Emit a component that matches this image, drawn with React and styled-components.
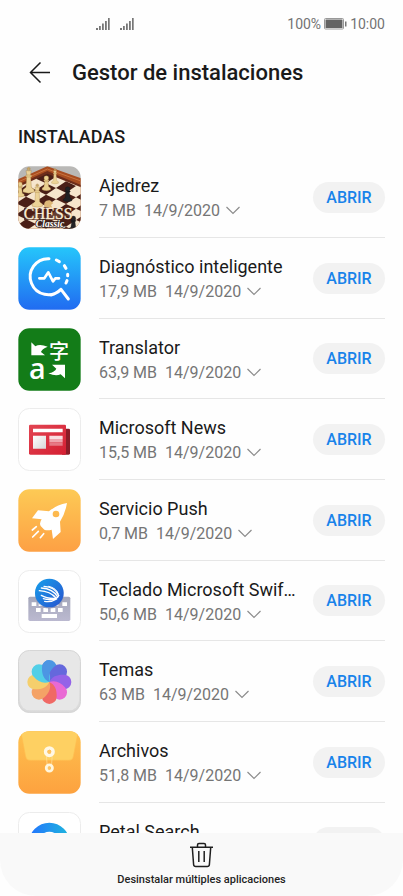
import React from "react";
import styled, { createGlobalStyle } from "styled-components";

const GlobalStyle = createGlobalStyle`
  * { box-sizing: border-box; }
  body { margin: 0; background: #ffffff; }
  button { font-family: inherit; border: 0; padding: 0; cursor: pointer; }
`;

const Screen = styled.div`
  display: flex;
  flex-direction: column;
  height: 100vh;
  overflow: hidden;
  background: #fefefe;
  color: #1a1a1a;
  font-family: Roboto, "Liberation Sans", sans-serif;
`;

const StatusBar = styled.div`
  display: flex;
  flex: none;
  align-items: center;
  justify-content: space-between;
  height: 48px;
  padding: 0 18px 0 96px;
  color: #737373;
  font-size: 14px;
`;

const StatusGroup = styled.div`
  display: flex;
  align-items: center;
  gap: ${(p) => p.$gap}px;
`;

const Header = styled.header`
  display: flex;
  flex: none;
  align-items: center;
  gap: 20px;
  height: 50px;
  padding: 0 28px;
`;

const BackButton = styled.button`
  display: flex;
  background: none;
  color: #1a1a1a;
`;

const Title = styled.h1`
  margin: 0;
  font-size: 22px;
  font-weight: 500;
  line-height: 28px;
`;

const SectionTitle = styled.h2`
  flex: none;
  margin: 0;
  padding: 27px 18px 8px;
  font-size: 18px;
  font-weight: 500;
  line-height: 24px;
`;

const AppList = styled.ul`
  display: grid;
  flex: 1;
  grid-auto-rows: 81px 81px 80px;
  align-content: start;
  min-height: 0;
  margin: 0;
  padding: 0 18px;
  overflow: hidden;
  list-style: none;
`;

const AppRow = styled.li`
  display: flex;
  align-items: center;
  gap: 18px;
  min-width: 0;
`;

const AppIcon = styled.svg`
  flex: none;
  width: 63px;
  height: 63px;
`;

const RowBody = styled.div`
  display: flex;
  flex: 1;
  align-items: center;
  gap: 16px;
  align-self: stretch;
  min-width: 0;
  border-bottom: 1px solid #e6e6e6;
`;

const AppInfo = styled.div`
  flex: 1;
  min-width: 0;
  padding-top: 3px;
`;

const AppName = styled.div`
  overflow: hidden;
  font-size: 18px;
  line-height: 24px;
  text-overflow: ellipsis;
  white-space: nowrap;
`;

const AppMeta = styled.div`
  display: flex;
  align-items: center;
  gap: 8px;
  margin-top: 1px;
  color: #757575;
  font-size: 16px;
  line-height: 24px;
  white-space: nowrap;
`;

const ExpandButton = styled.button`
  display: flex;
  margin-left: -2px;
  background: none;
  color: #8c8c8c;
`;

const OpenButton = styled.button`
  flex: none;
  width: 72px;
  height: 31px;
  border-radius: 16px;
  background: #f2f2f2;
  color: #1883ea;
  font-size: 16px;
  font-weight: 500;
`;

const BottomBar = styled.footer`
  flex: none;
  overflow: hidden;
  border-radius: 0 0 36px 36px;
  background: #f9f9f9;
`;

const UninstallButton = styled.button`
  display: flex;
  flex-direction: column;
  align-items: center;
  width: 100%;
  height: 63px;
  padding-top: 9px;
  background: none;
  color: #1f1f1f;
  font-size: 11px;
  font-weight: 500;
  line-height: 16px;
  gap: 4px;
`;

const SignalIcon = () => (
  <svg width="14" height="14" viewBox="0 0 14 14" fill="#777777" aria-hidden="true">
    <path d="M0 11h2v2H0zM3 9h1.800v4H3zM6 6.500h1.800v6.500H6zM9 4h1.800v9H9zM12 1h1.700v12H12z" />
  </svg>
);

const BatteryIcon = () => (
  <svg width="23" height="12" viewBox="0 0 23 12" aria-hidden="true">
    <rect x=".5" y=".5" width="19" height="10.500" rx="1" fill="#fff" stroke="#999" />
    <rect x="1.500" y="1.500" width="17" height="8.500" fill="#646464" />
    <path d="M21 3.500h1.500v5H21z" fill="#777" />
  </svg>
);

const BackIcon = () => (
  <svg width="24" height="24" viewBox="0 0 24 24" fill="none" stroke="currentColor" strokeWidth="1.500" aria-hidden="true">
    <path d="M22 11.500H3M12.500 1.500l-10 10 10 10" />
  </svg>
);

const ChevronIcon = () => (
  <svg width="14" height="10" viewBox="0 0 14 10" fill="none" stroke="currentColor" strokeWidth="1.200" aria-hidden="true">
    <path d="M.5 1 7 7.500 13.500 1" />
  </svg>
);

const TrashIcon = () => (
  <svg width="26" height="26" viewBox="0 0 26 26" fill="none" stroke="currentColor" strokeWidth="1.500" strokeLinejoin="round" aria-hidden="true">
    <path d="M1 5.200h23M8.500 5V3q0-1.500 1.500-1.500h5q1.500 0 1.500 1.500v2M3.300 5.500l1.300 17Q4.800 24.500 6.700 24.500h11.600q1.900 0 2.100-2l1.300-17M9.800 9v11M15.200 9v11" />
  </svg>
);

const Tile = ({ children, fill, id, from, to, stroke = "none" }) => (
  <AppIcon viewBox="0 0 189 189" aria-hidden="true">
    <defs>
      <linearGradient id={id} x1="0" y1="0" x2="0" y2="1">
        <stop offset="0" stopColor={from || fill} />
        <stop offset="1" stopColor={to || fill} />
      </linearGradient>
      <clipPath id={`${id}-clip`}>
        <rect x="1" y="1" width="187" height="187" rx="33" />
      </clipPath>
    </defs>
    <g clipPath={`url(#${id}-clip)`}>
      <rect width="189" height="189" fill={`url(#${id})`} />
      {children}
    </g>
    <rect x="1.500" y="1.500" width="186" height="186" rx="33" fill="none" stroke={stroke} strokeWidth="3" />
  </AppIcon>
);

const BOARD_CELLS = [];
for (let r = 0; r < 7; r += 1) {
  for (let c = 0; c < 7; c += 1) {
    if ((r + c) % 2 === 0) BOARD_CELLS.push([c, r]);
  }
}

const Pawn = ({ x, y, s = 1, fill = "#e9cf8f", edge = "#9c7435" }) => (
  <g transform={`translate(${x} ${y}) scale(${s})`} fill={fill} stroke={edge} strokeWidth="1">
    <path d="M-5-25h10L8-4l6 4v6q-14 6-28 0V0l6-4z" />
    <ellipse cy="-25" rx="9" ry="3" />
    <circle cy="-33" r="8" />
  </g>
);

const King = ({ x, y, s = 1, fill = "#ecd397", edge = "#9c7435" }) => (
  <g transform={`translate(${x} ${y}) scale(${s})`} fill={fill} stroke={edge} strokeWidth="1">
    <path d="M-6-42H6L8-8l9 7v7q-17 7-34 0v-7l9-7z" />
    <path d="M-8-58H8L5-43H-5z" />
    <ellipse cy="-42" rx="10" ry="3" />
    <path d="M-2-68h4v10h-4zM-5-65H5v3H-5z" />
  </g>
);

const ChessIcon = () => (
  <Tile id="chess" fill="#b9b8b6">
    <path d="M0 40 88 1l101 36v152H0z" fill="#a84d20" />
    <path d="M0 48 88 9l101 36" fill="none" stroke="#c97440" strokeWidth="3" />
    <path d="M0 60 88 18l101 42v129H0z" fill="#f6e6cd" />
    <g transform="matrix(30 14 -30 20 84 18)">
      {BOARD_CELLS.map(([c, r]) => (
        <rect key={`${c}-${r}`} x={c} y={r} width="1" height="1" fill="#4a1f17" />
      ))}
    </g>
    <path d="M0 56 88 15l101 42v7L88 23 0 64z" fill="#6d2c19" />
    <Pawn x={6} y={85} s={0.9} />
    <King x={32} y={72} s={1} />
    <Pawn x={85} y={66} s={0.9} />
    <King x={111} y={48} s={0.6} />
    <King x={58} y={115} s={0.9} />
    <path d="M79 123q-4-22 17-20l10 8-7 6 4 8z" fill="#dcb777" />
    <Pawn x={149} y={99} s={0.9} fill="#202124" edge="#121212" />
    <Pawn x={166} y={187} s={0.9} fill="#242326" edge="#121212" />
    <path d="M18 126h142v36H18z" fill="#4b1e18" opacity=".85" />
    <text x="90" y="159" textAnchor="middle" fontFamily="Liberation Serif, serif" fontSize="47" fill="#fbeed6" stroke="#fbeed6" strokeWidth="1">CHESS</text>
    <text x="96" y="183" textAnchor="middle" fontFamily="Liberation Serif, serif" fontSize="29" fontStyle="italic" fontWeight="700" fill="#fff" stroke="#38231e" strokeWidth="5" paintOrder="stroke">Classic</text>
  </Tile>
);

const DiagnosticIcon = () => (
  <Tile id="diagnostic" from="#25c6fb" to="#216bf1">
    <g fill="none" stroke="#fff" strokeWidth="9" strokeLinecap="round" strokeLinejoin="round">
      <path d="M93 35a54 54 0 1 0 36 92l22 29M129 127q-12 13-30 17" />
      <path d="M115 39l9 5M139 56l5 8M149 82v4M147 101l-3 7" />
      <path d="M64 94h15l12-18 14 27 7-9h11" strokeWidth="8" />
    </g>
  </Tile>
);

const TranslatorIcon = () => (
  <Tile id="translator" fill="#137c18">
    <text x="33" y="152" fontFamily="Open Sans, sans-serif" fontSize="86" fontWeight="600" fill="#fff">a</text>
    <text x="93" y="93" fontFamily="Noto Sans CJK SC, sans-serif" fontSize="60" fontWeight="500" fill="#fff">字</text>
    <path d="M40 43l12 12q13-8 37 1-18 7-20 16l12 10H40zM141 151l-13-12q-15 7-37-3 20-4 24-14l-13-12h39z" fill="#fff" />
  </Tile>
);

const NewsIcon = () => (
  <Tile id="news" fill="#fff" stroke="#ececec">
    <defs>
      <linearGradient id="news-page" x1="0" y1="0" x2="1" y2="1"><stop stopColor="#e24552" /><stop offset="1" stopColor="#d51f32" /></linearGradient>
      <linearGradient id="news-photo" x1="0" y1="0" x2="1" y2="1"><stop stopColor="#fff" /><stop offset="1" stopColor="#d8d8d8" /></linearGradient>
    </defs>
    <path d="M140 62h12q4 0 4 4v70q0 4-4 4h-20z" fill="#8b1c27" />
    <rect x="33" y="50" width="111" height="90" rx="4" fill="url(#news-page)" />
    <path d="M45 62h89v11H45z" fill="#fff" />
    <path d="M45 83h39v39H45z" fill="url(#news-photo)" />
    <path d="M94 83h40v10H94z" fill="#f9dfe2" />
    <path d="M94 93h40v10H94z" fill="#efa5ae" />
    <path d="M94 103h40v10H94z" fill="#e67985" />
  </Tile>
);

const PushIcon = () => (
  <Tile id="push" from="#fdca55" to="#fda044">
    <path fillRule="evenodd" d="M147 42q-31 5-54 25l-33-3-18 24 29 3q-8 11-3 20l11 11q9 4 22 0l4 28 23-21-2-31q15-22 21-56zM114 65a10 10 0 1 0 0 20 10 10 0 1 0 0-20z" fill="#fff" />
    <path d="M55 113l-12 10M61 127l-17 17M77 134l-10 12" fill="none" stroke="#fff" strokeWidth="5" strokeLinecap="round" />
  </Tile>
);

const SwiftIcon = () => (
  <Tile id="swift" fill="#fff" stroke="#ececec">
    <defs>
      <linearGradient id="swift-ball" x1="0" y1="0" x2="1" y2="1"><stop stopColor="#16a0eb" /><stop offset="1" stopColor="#2852ce" /></linearGradient>
      <linearGradient id="swift-keys" x1="0" y1="0" x2="0" y2="1"><stop stopColor="#a5a8bb" /><stop offset="1" stopColor="#bbb9d0" /></linearGradient>
    </defs>
    <rect x="31" y="80" width="126" height="73" rx="5" fill="url(#swift-keys)" />
    <path d="M41 97h14v11H41zM62 97h14v11H62zM107 97h14v11h-14zM133 97h14v11h-14zM54 114h14v12H54zM76 114h14v12H76zM98 114h14v12H98zM120 114h14v12h-14zM71 132h46v12H71z" fill="#fff" />
    <circle cx="94" cy="73" r="43" fill="#777ea4" opacity=".35" />
    <circle cx="94" cy="69" r="43" fill="url(#swift-ball)" />
    <g fill="none" stroke="#fff" strokeWidth="4" strokeLinecap="round">
      <path d="M78 49q34 2 44 28M70 54q35 2 49 27M64 62q33 2 50 22" />
      <path d="M122 77q-2 7-10 8-26 1-42-9M118 83q-18 10-42 3M116 87q-15 10-36 7" />
      <path d="M92 49q24 5 29 23" strokeWidth="3" />
    </g>
  </Tile>
);

const PETALS = [
  ["#4c96e3", 0], ["#6568dc", 45], ["#9463e8", 90], ["#e969d4", 135],
  ["#f06965", 180], ["#f4a266", 225], ["#f5cf6c", 270], ["#52cfe7", 315],
];

const ThemesIcon = () => (
  <Tile id="themes" from="#e9e9e9" to="#d9d9d9" stroke="#d6d6d6">
    <rect x="6" y="3" width="177" height="178" rx="30" fill="#e7e7e7" />
    <defs>
      <clipPath id="left-half"><path d="M60 20h34v77H60z" /></clipPath>
    </defs>
    {PETALS.map(([color, angle]) => (
      <path
        key={angle}
        d="M94 96C76 88 71 70 72 52a22 22 0 0 1 44 0C117 70 112 88 94 96z"
        fill={color}
        transform={`rotate(${angle} 94 96)`}
      />
    ))}
    <path d="M94 96C76 88 71 70 72 52a22 22 0 0 1 44 0C117 70 112 88 94 96z" fill="#4c96e3" clipPath="url(#left-half)" />
  </Tile>
);

const FilesIcon = () => (
  <Tile id="files" from="#fec14f" to="#fda23f">
    <path d="M8 0h173l-15 77q-2 11-13 11H36q-11 0-13-11z" fill="#fed062" stroke="#ffbe50" strokeWidth="2" />
    <path d="M85 70l3 40M103 70l-3 40" fill="none" stroke="#ffe3a0" strokeWidth="2" />
    <circle cx="94" cy="62" r="11" fill="#eaa344" stroke="#fff8e5" strokeWidth="11" />
    <circle cx="94" cy="62" r="6" fill="#ffc45d" />
    <circle cx="94" cy="111" r="9" fill="#ec9e3e" stroke="#fff6dd" strokeWidth="9" />
    <circle cx="94" cy="111" r="5" fill="#ffc563" />
  </Tile>
);

const PetalSearchIcon = () => (
  <Tile id="petal" fill="#fff" stroke="#ececec">
    <defs>
      <linearGradient id="petal-ring" x1="0" y1="0" x2="1" y2="0"><stop stopColor="#237bfb" /><stop offset="1" stopColor="#1eafe0" /></linearGradient>
    </defs>
    <circle cx="94" cy="94" r="48" fill="none" stroke="url(#petal-ring)" strokeWidth="27" />
  </Tile>
);

const APPS = [
  { name: "Ajedrez", size: "7 MB", Icon: ChessIcon },
  { name: "Diagnóstico inteligente", size: "17,9 MB", Icon: DiagnosticIcon },
  { name: "Translator", size: "63,9 MB", Icon: TranslatorIcon },
  { name: "Microsoft News", size: "15,5 MB", Icon: NewsIcon },
  { name: "Servicio Push", size: "0,7 MB", Icon: PushIcon },
  { name: "Teclado Microsoft SwiftKey", size: "50,6 MB", Icon: SwiftIcon },
  { name: "Temas", size: "63 MB", Icon: ThemesIcon },
  { name: "Archivos", size: "51,8 MB", Icon: FilesIcon },
  { name: "Petal Search", size: "12,4 MB", Icon: PetalSearchIcon },
];

export default function App() {
  return (
    <Screen>
      <GlobalStyle />
      <StatusBar>
        <StatusGroup $gap={10}>
          <SignalIcon />
          <SignalIcon />
        </StatusGroup>
        <StatusGroup $gap={3}>
          <span>100%</span>
          <BatteryIcon />
          <span>10:00</span>
        </StatusGroup>
      </StatusBar>
      <Header>
        <BackButton aria-label="Atrás"><BackIcon /></BackButton>
        <Title>Gestor de instalaciones</Title>
      </Header>
      <SectionTitle>INSTALADAS</SectionTitle>
      <AppList>
        {APPS.map(({ name, size, Icon }) => (
          <AppRow key={name}>
            <Icon />
            <RowBody>
              <AppInfo>
                <AppName>{name}</AppName>
                <AppMeta>
                  <span>{size}</span>
                  <span>14/9/2020</span>
                  <ExpandButton aria-label={`Detalles de ${name}`}><ChevronIcon /></ExpandButton>
                </AppMeta>
              </AppInfo>
              <OpenButton>ABRIR</OpenButton>
            </RowBody>
          </AppRow>
        ))}
      </AppList>
      <BottomBar>
        <UninstallButton>
          <TrashIcon />
          Desinstalar múltiples aplicaciones
        </UninstallButton>
      </BottomBar>
    </Screen>
  );
}
